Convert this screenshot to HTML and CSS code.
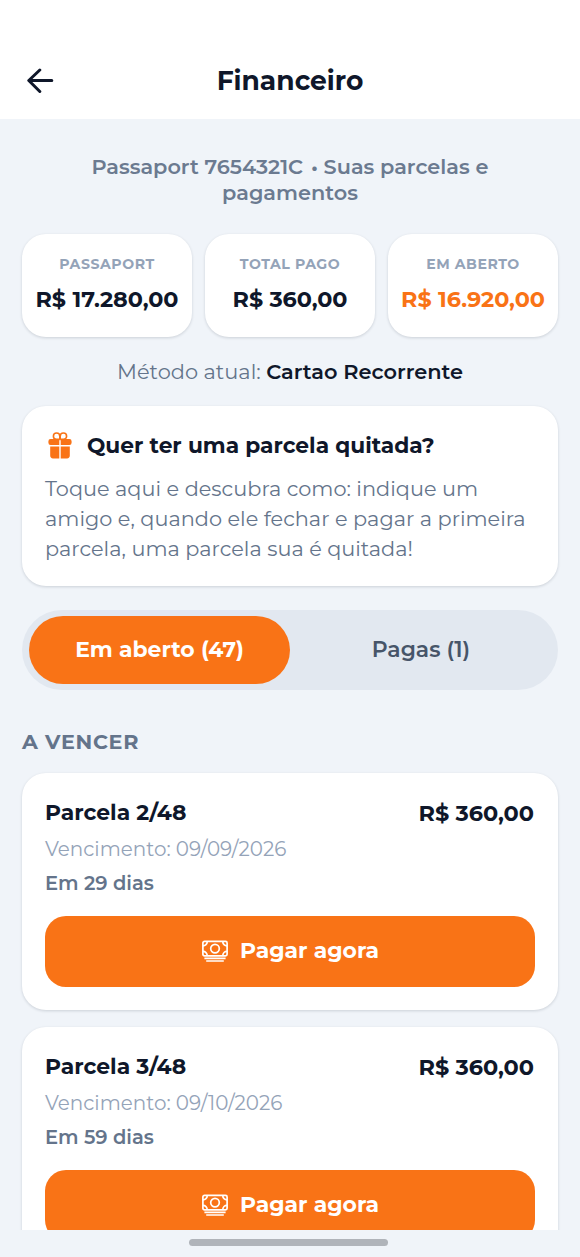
FILE: index.html
```html
<!DOCTYPE html>
<html lang="pt-BR">
<head>
<meta charset="utf-8">
<title>Financeiro</title>
<link rel="stylesheet" href="styles.css">
</head>
<body>
<svg width="0" height="0" class="defs" aria-hidden="true">
  <symbol id="cash" viewBox="0 0 28 24">
    <g fill="none" stroke="currentColor" stroke-width="1.7">
      <rect x="1.9" y="1.3" width="24.2" height="14.6" rx="1.6"/>
      <circle cx="14" cy="8.6" r="4.3"/>
      <path d="M2 5.9a4.2 4.2 0 0 0 4.2-4.2M26 5.9a4.2 4.2 0 0 1-4.2-4.2M2 11.3a4.2 4.2 0 0 1 4.2 4.2M26 11.3a4.2 4.2 0 0 0-4.2 4.2"/>
      <path d="M3.4 18.4h21.2M5.2 21h17.6" stroke-width="1.7"/>
    </g>
  </symbol>
</svg>
<div class="screen">
  <header class="header">
    <svg class="back" viewBox="0 0 28 26"><path d="M13.8 2 2.8 12.5l11 11M3.5 12.5h22.3" fill="none" stroke="currentColor" stroke-width="3" stroke-linecap="round" stroke-linejoin="round"/></svg>
    <h1 class="title">Financeiro</h1>
  </header>
  <main class="content">
    <p class="subtitle">Passaport 7654321C&#8202; • Suas parcelas e pagamentos</p>
    <section class="stats">
      <div class="stat"><span class="label">PASSAPORT</span><span class="value">R$ 17.280,00</span></div>
      <div class="stat"><span class="label">TOTAL PAGO</span><span class="value">R$ 360,00</span></div>
      <div class="stat"><span class="label">EM ABERTO</span><span class="value accent">R$ 16.920,00</span></div>
    </section>
    <p class="method">Método atual: <strong>Cartao Recorrente</strong></p>
    <section class="promo">
      <div class="promo-head">
        <svg class="gift" viewBox="0 0 24 27">
          <g fill="none" stroke="currentColor" stroke-width="1.6"><path d="M11.8 7.5V4.2A3.2 3.2 0 1 0 8.6 7.4h3.2M12.2 7.5V4.2a3.2 3.2 0 1 1 3.2 3.2h-3.2"/></g>
          <path fill="currentColor" d="M2.6 7H11.3v6H2.6A2.2 2.2 0 0 1 .4 10.8V9.2A2.2 2.2 0 0 1 2.6 7zM12.7 7h8.7a2.2 2.2 0 0 1 2.2 2.2v1.6a2.2 2.2 0 0 1-2.2 2.2h-8.7zM2.2 14.5h9.1v11.9H5a2.8 2.8 0 0 1-2.8-2.8zM12.7 14.5h9.1v9.1a2.8 2.8 0 0 1-2.8 2.8h-6.3z"/>
        </svg>
        <h2 class="promo-title">Quer ter uma parcela quitada?</h2>
      </div>
      <p class="promo-text">Toque aqui e descubra como: indique um amigo e, quando ele fechar e pagar a primeira parcela, uma parcela sua é quitada!</p>
    </section>
    <nav class="tabs">
      <span class="tab active">Em aberto (47)</span>
      <span class="tab">Pagas (1)</span>
    </nav>
    <h3 class="section">A VENCER</h3>
    <article class="card">
      <div class="row"><span class="name">Parcela 2/48</span><span class="amount">R$ 360,00</span></div>
      <p class="due">Vencimento: 09/09/2026</p>
      <p class="days">Em 29 dias</p>
      <button class="pay"><svg class="cash"><use href="#cash"/></svg><span>Pagar agora</span></button>
    </article>
    <article class="card">
      <div class="row"><span class="name">Parcela 3/48</span><span class="amount">R$ 360,00</span></div>
      <p class="due">Vencimento: 09/10/2026</p>
      <p class="days">Em 59 dias</p>
      <button class="pay"><svg class="cash"><use href="#cash"/></svg><span>Pagar agora</span></button>
    </article>
  </main>
  <footer class="home"><span class="home-bar"></span></footer>
</div>
</body>
</html>
```
FILE: styles.css
```css
* { box-sizing: border-box; margin: 0; padding: 0; }
body { background: #f0f4f9; color: #0f172a; font-family: Montserrat, Inter, "Open Sans", sans-serif; }
.defs { display: none; }
.screen { display: flex; flex-direction: column; height: 1257px; overflow: hidden; }
.header { flex: none; display: grid; grid-template-columns: 28px 1fr 28px; align-items: center; height: 119px; padding: 42px 26px 0; background: #fff; }
.back { width: 28px; height: 26px; }
.title { font-size: 26.5px; font-weight: 700; line-height: 36px; text-align: center; }
.content { flex: 1; min-height: 0; overflow: hidden; padding: 35px 22px 0; }
.subtitle { padding: 0 40px; font-size: 20.85px; font-weight: 600; line-height: 26px; text-align: center; color: #6b7a90; }
.stats { display: grid; grid-template-columns: repeat(3, 1fr); gap: 13px; margin-top: 28px; }
.stat, .promo, .card { background: #fff; border-radius: 24px; box-shadow: 0 1px 3px rgba(15, 23, 42, .16); }
.stat { display: flex; flex-direction: column; align-items: center; height: 103px; padding-top: 21px; white-space: nowrap; }
.label { font-size: 14.1px; font-weight: 700; line-height: 18px; letter-spacing: .55px; color: #94a3b8; }
.value { margin-top: 12px; font-size: 22.3px; font-weight: 700; line-height: 28px; }
.accent { color: #f97316; }
.method { margin-top: 22px; font-size: 20.9px; line-height: 26px; text-align: center; color: #64748b; }
.method strong { font-size: 20.9px; font-weight: 600; color: #0f172a; }
.promo { height: 180px; margin-top: 21px; padding: 24px 23px 0; }
.promo-head { display: flex; align-items: center; gap: 15px; height: 29px; padding-left: 3px; }
.gift { width: 24px; height: 27px; margin-top: 2px; color: #f97316; }
.promo-title { font-size: 21.75px; font-weight: 700; line-height: 28px; }
.promo-text { margin-top: 15px; font-size: 20.85px; line-height: 30px; color: #64748b; }
.tabs { display: grid; grid-template-columns: 1fr 1fr; height: 80px; margin-top: 24px; padding: 6px; border-radius: 40px; background: #e2e8f0; }
.tab { display: flex; align-items: center; justify-content: center; padding-bottom: 3px; border-radius: 34px; font-size: 21.9px; font-weight: 600; color: #475569; }
.tab.active { margin-left: 1px; background: #f97316; color: #fff; font-weight: 700; }
.section { margin-top: 39px; font-size: 20.7px; font-weight: 700; line-height: 26px; letter-spacing: .7px; color: #64748b; }
.card { height: 237px; margin-top: 18px; padding: 25px 23px 0; }
.card + .card { margin-top: 17px; }
.row { display: flex; justify-content: space-between; height: 30px; }
.name { font-size: 21.9px; font-weight: 700; line-height: 28px; }
.amount { margin-right: 1px; font-size: 22.4px; font-weight: 700; line-height: 30px; }
.due { margin-top: 8px; font-size: 19.9px; line-height: 26px; color: #94a3b8; }
.days { margin-top: 8px; font-size: 19.5px; font-weight: 600; line-height: 26px; color: #64748b; }
.pay { display: flex; align-items: center; justify-content: center; gap: 11px; width: 100%; height: 71px; margin-top: 20px; border: 0; border-radius: 21px; background: #f97316; color: #fff; font: 700 21.9px Montserrat, Inter, "Open Sans", sans-serif; }
.pay span { padding-bottom: 4px; }
.cash { width: 28px; height: 24px; }
.home { flex: none; display: flex; justify-content: center; height: 27px; padding: 9px 3px 0 0; }
.home-bar { width: 199px; height: 7px; border-radius: 4px; background: #b0b4ba; }
```
